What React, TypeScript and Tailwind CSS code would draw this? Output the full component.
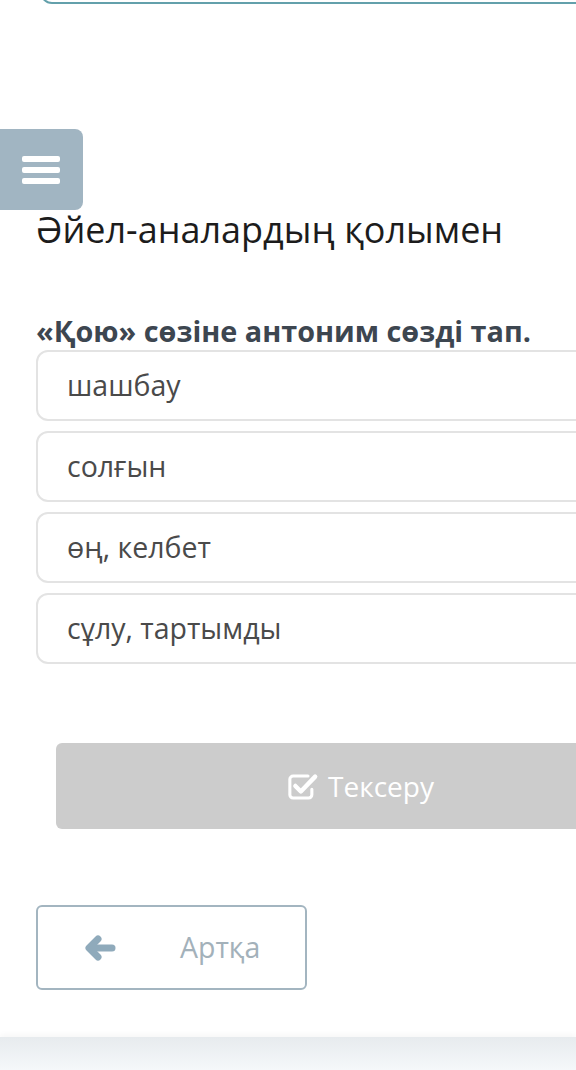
import React from "react";

function CheckSquare() {
  return (
    <svg width="33" height="31" viewBox="0 0 30 28" fill="none">
      <path
        d="M20 4.5H6.5a3 3 0 0 0-3 3v14a3 3 0 0 0 3 3h14a3 3 0 0 0 3-3v-5"
        stroke="white"
        strokeWidth="2.8"
        strokeLinecap="round"
      />
      <path
        d="M8.5 13.5l5 5L26.5 5"
        stroke="white"
        strokeWidth="4"
        strokeLinecap="round"
        strokeLinejoin="round"
      />
    </svg>
  );
}

function ArrowLeft() {
  return (
    <svg width="31" height="26" viewBox="0 0 31 26" fill="none">
      <path
        d="M13 4L4 13l9 9"
        stroke="#8faabb"
        strokeWidth="7"
        strokeLinecap="round"
        strokeLinejoin="round"
      />
      <path d="M5 13h22" stroke="#8faabb" strokeWidth="7" strokeLinecap="round" />
    </svg>
  );
}

const options = ["шашбау", "солғын", "өң, келбет", "сұлу, тартымды"];

export default function App() {
  return (
    <div
      className="relative w-[576px] h-[1070px] overflow-hidden bg-white flex flex-col"
      style={{ fontFamily: '"Open Sans", "Noto Sans", sans-serif' }}
    >
      <div className="ml-[40px] mt-[-40px] h-[44px] w-[620px] shrink-0 rounded-[12px] border-2 border-[#63a0ab]" />

      <button className="absolute left-0 top-[129px] w-[83px] h-[81px] rounded-r-[8px] bg-[#a1b5c2] flex flex-col items-center justify-center gap-[5px] pr-[2px]">
        <span className="block w-[38px] h-[6px] rounded-[2px] bg-white" />
        <span className="block w-[38px] h-[6px] rounded-[2px] bg-white" />
        <span className="block w-[38px] h-[6px] rounded-[2px] bg-white" />
      </button>

      <h1 className="mt-[203px] pl-[36px] text-[36px] leading-[46px] text-[#1c1c1c] font-normal whitespace-nowrap">
        Әйел-аналардың қолымен
      </h1>

      <p className="mt-[60px] pl-[36px] text-[28.8px] leading-[36px] font-bold text-[#3d4650] whitespace-nowrap">
        «Қою» сөзіне антоним сөзді тап.
      </p>

      <div className="mt-[1px] ml-[36px] flex flex-col gap-[10px]">
        {options.map((o) => (
          <div
            key={o}
            className="w-[620px] h-[71px] rounded-[12px] border-2 border-[#e3e3e3] flex items-center pl-[29px] text-[28.5px] text-[#4a4a4a] whitespace-nowrap"
          >
            {o}
          </div>
        ))}
      </div>

      <div className="mt-[79px] ml-[56px] w-[608px] h-[86px] shrink-0 rounded-[6px] bg-[#cccccc] flex items-center justify-center gap-[9px] text-white text-[28px]">
        <CheckSquare />
        <span>Тексеру</span>
      </div>

      <div className="mt-[76px] ml-[36px] w-[271px] h-[85px] shrink-0 rounded-[6px] border-2 border-[#a3b5c0] flex items-center text-[28.5px] text-[#a3b1ba]">
        <span className="ml-[47px] flex">
          <ArrowLeft />
        </span>
        <span className="ml-[64px]">Артқа</span>
      </div>

      <div className="mt-[47px] flex-1 bg-gradient-to-b from-[#e7ebee] to-[#f5f8fa] shadow-[0_-2px_6px_rgba(0,0,0,0.04)]" />
    </div>
  );
}
